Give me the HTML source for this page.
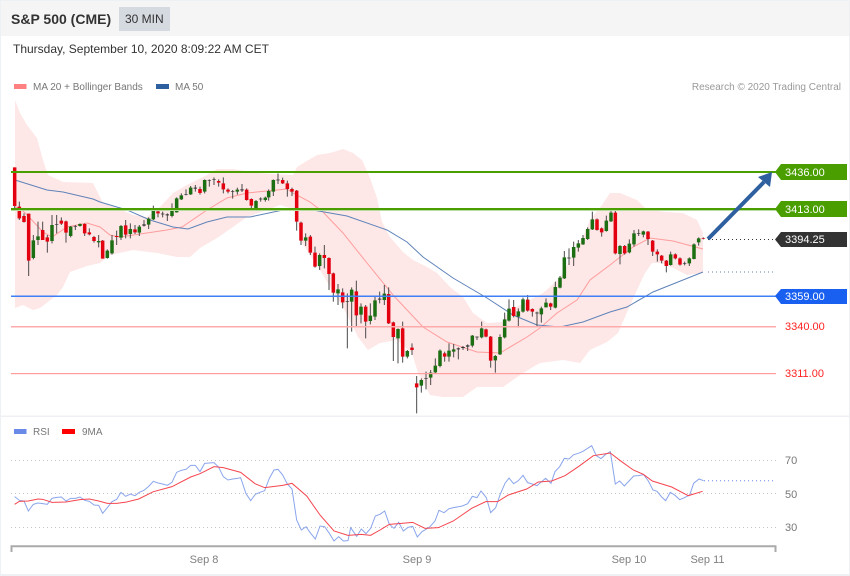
<!DOCTYPE html>
<html><head><meta charset="utf-8">
<style>
html,body{margin:0;padding:0;background:#fff}
body{width:850px;height:576px;overflow:hidden;position:relative;font-family:"Liberation Sans",sans-serif}
svg{position:absolute;left:0;top:0}
text{font-family:"Liberation Sans",sans-serif}
</style></head>
<body>
<svg width="850" height="576" viewBox="0 0 850 576">
<rect width="850" height="576" fill="#fff"/>
<rect x="0" y="0" width="850" height="36" fill="#f5f5f5"/>
<rect x="0" y="0" width="850" height="1" fill="#eef1f4"/>
<rect x="0" y="0" width="1" height="576" fill="#eef1f4"/>
<rect x="849" y="0" width="1" height="576" fill="#eef1f4"/>
<rect x="0" y="415.5" width="850" height="1.5" fill="#eef0f3"/>
<rect x="0" y="574" width="850" height="2" fill="#eef1f4"/>
<rect x="119" y="7" width="51" height="24" fill="#d5d9e0"/>
<text x="11" y="24" font-size="14" font-weight="700" fill="#333">S&amp;P 500 (CME)</text>
<text x="125" y="23" font-size="12" fill="#333">30 MIN</text>
<text x="13" y="53" font-size="12" fill="#333">Thursday, September 10, 2020 8:09:22 AM CET</text>
<rect x="14" y="84" width="12.5" height="5" fill="#ff8080"/>
<text x="33" y="90" font-size="10" fill="#777">MA 20 + Bollinger Bands</text>
<rect x="156" y="84" width="13" height="5" fill="#2e5f9e"/>
<text x="175" y="90" font-size="10" fill="#777">MA 50</text>
<text x="841" y="90" font-size="10" fill="#999" text-anchor="end">Research © 2020 Trading Central</text>

<polygon fill="#fee7e7" points="15,100 20,113 27,125 37,138 43,160 48,175 63,182 93,183 100,197 103,203 117,208 133,215 147,217 160,207 173,193 187,185 207,175 217,169 233,169 257,173 293,175 297,167 305,162 317,155 330,153 343,149 353,153 362,160 370,178 377,198 382,222 390,237 403,252 413,260 427,267 437,273 450,287 463,297 473,313 487,323 502,322 510,310 530,300 543,293 560,278 570,260 577,247 583,237 590,220 602,205 610,193 620,193 637,200 647,210 667,212 683,213 697,220 703,233 703,273 687,275 673,268 660,263 652,263 645,273 637,290 628,310 618,333 607,342 590,350 580,363 563,360 540,363 533,367 520,375 503,387 477,387 463,397 443,397 430,395 418,373 412,353 397,340 380,343 368,350 358,337 343,307 335,295 320,270 300,240 297,210 280,205 267,210 247,217 233,227 217,238 200,248 190,257 177,257 157,253 133,250 110,255 100,263 87,266 70,272 63,287 57,295 40,308 33,310 23,305 15,308"/>

<polyline fill="none" stroke="#ff9c9c" stroke-width="1" points="15,207 20,208 29,217 43,232 52,237 67,227 87,223 100,227 110,235 120,237 140,234 167,230 182,227 207,210 227,198 247,193 267,191 287,189 293,193 310,202 323,212 343,233 367,263 393,295 423,327 447,342 477,352 500,353 527,337 540,328 557,313 577,300 590,280 610,265 633,247 650,238 673,241 703,249"/>
<polyline fill="none" stroke="#5f83b8" stroke-width="1" points="15,180 47,190 63,192 93,199 100,202 127,210 150,220 173,227 188,229 207,222 227,217 250,217 283,210 313,210 347,216 387,230 407,242 423,257 453,278 487,298 513,315 537,325 560,327 583,322 610,312 627,307 653,292 703,272"/>

<!-- candles part 1 -->
<g transform="translate(0 160) scale(.33333)" fill="none">
<path stroke="#4a4a4a" stroke-width="3" d="M44 22V145M58 125V180M72 160V188M86 161V348M100 225V298M114 185V255M128 185V240M142 225V278M156 165V250M170 165V220M184 172V195M198 182V248M212 198V232M226 195V210M240 190V200M254 190V228M268 205V226M282 228V248M296 225V262M308 240V296M322 268V296M336 225V284M350 212V255M363 195V240M377 180V235M391 190V235M405 195V222M418 195V228M432 180V200M446 172V207M460 137V180M474 150V172M488 155V172M502 160V183M516 130V172M530 112V158M544 100V120M558 88V106M572 78V105M586 75V95M600 80V104M614 58V100M628 58V80M642 52V75M656 58V80M670 52V100M684 85V100M698 90V116M712 83V104M726 72V96M740 85V122M754 115V145M768 120V150M782 112V125M796 110V125M806 88V122M820 58V108M834 40V72M848 53V72M862 62V110M876 83V108M890 90V212"/>
<path stroke="#e3000f" stroke-width="10.5" d="M44 22V138M58 140V175M72 168V186M86 161V302M128 210V240M142 232V245M184 182V191M198 184V218M254 192V220M268 217V223M282 231V243M308 242V296M350 228V231M377 196V224M405 208V217M474 154V160M600 87V99M656 63V68M670 70V88M684 89V95M740 89V120M754 117V137M848 60V70M862 70V87M876 87V95M890 92V185"/>
<path stroke="#1c6e12" stroke-width="10.5" d="M100 241V294M114 229V240M156 195V243M212 200V228M240 192V198M296 243V247M322 272V294M336 241V280M363 198V233M391 207V222M418 200V218M446 176V194M460 152V178M516 152V168M530 115V157M544 106V118M572 83V103M614 60V95M712 89V95M768 123V145M796 113V120M806 93V112M820 60V95"/>
<path stroke="#333" stroke-width="10.5" d="M170 192V194M226 199V201M432 193V197M488 161V163M502 163V166M558 103V105M586 83V86M628 60V62M642 58V60M698 94V96M726 88V91M782 116V118M834 59V61"/>
</g>
<!-- candles part 2 -->
<g transform="translate(280 140) scale(.33333)" fill="none">
<path stroke="#4a4a4a" stroke-width="3" d="M63 245V315M77 280V318M91 285V345M105 320V383M119 340V390M133 315V385M147 352V450M160 398V485M174 432V495M188 445V505M202 460V625M215 442V575M229 422V560M243 490V550M257 495V595M271 490V553M285 470V540M299 455V490M313 435V495M326 442V552M340 545V663M354 565V670M368 545V668M382 630V655M396 610V645M410 708V820M424 715V758M438 695V748M452 690V735M466 655V700M480 628V682M494 635V665M507 610V665M521 612V652M535 622V658M549 618V630M563 613V633M577 585V622M591 590V600M605 545V595M618 566V592M632 588V683M646 645V698M660 583V645M674 518V595M687 478V545M701 480V532M715 505V563M729 473V518M743 465V515M757 505V530M771 515V558"/>
<path stroke="#e3000f" stroke-width="10.5" d="M63 248V302M91 290V338M105 338V380M133 345V354M147 354V402M160 400V458M188 457V487M229 454V526M257 500V545M326 462V550M340 547V591M368 565V650M396 623V630M410 730V742M494 640V650M618 568V590M632 590V662M701 501V528M743 479V512M757 507V515"/>
<path stroke="#1c6e12" stroke-width="10.5" d="M77 292V302M119 345V378M174 448V460M215 449V485M243 500V524M271 527V543M285 481V530M313 461V480M354 567V595M382 633V650M424 720V737M452 698V713M466 677V697M480 632V678M507 632V650M521 628V635M577 587V617M605 565V592M646 648V661M660 591V643M674 538V592M687 506V542M715 514V530M729 478V515"/>
<path stroke="#333" stroke-width="10.5" d="M202 484V486M299 476V479M438 714V716M535 625V628M549 621V624M563 616V620M591 590V592M771 518V520"/>
</g>
<!-- candles part 3 -->
<g transform="translate(540 150) scale(.33333)" fill="none">
<path stroke="#4a4a4a" stroke-width="3" d="M4 470V518M18 445V472M32 458V480M46 395V475M60 378V415M73 303V387M87 295V345M101 275V348M115 270V305M129 255V285M143 232V270M157 185V240M171 205V242M185 232V260M199 197V245M213 180V216M226 175V313M240 285V343M254 285V314M268 268V310M282 240V290M296 238V258M310 242V262M324 243V285M338 270V318M352 298V335M365 315V340M379 330V367M392 305V347M406 310V328M420 322V347M434 335V346M448 322V348M462 280V328M476 262V287M490 262V268"/>
<path stroke="#e3000f" stroke-width="10.5" d="M32 460V470M171 208V240M185 235V247M226 188V310M254 288V310M324 245V267M338 272V305M352 305V313M365 317V332M379 332V348M406 313V325M420 325V344M490 264V266"/>
<path stroke="#1c6e12" stroke-width="10.5" d="M4 475V493M18 458V472M46 411V473M60 383V413M73 322V385M101 291V323M115 280V293M129 264V283M143 237V267M157 208V238M199 212V243M213 188V214M240 288V312M268 281V307M282 250V283M310 244V254M392 313V345M448 325V340M462 283V327M476 265V277"/>
<path stroke="#333" stroke-width="10.5" d="M87 323V325M296 250V252M434 339V341"/>
</g>

<!-- horizontal levels -->
<rect x="11" y="171" width="765" height="2" fill="#4a9e00"/>
<rect x="11" y="208" width="765" height="2" fill="#4a9e00"/>
<rect x="11" y="210" width="765" height="1" fill="#b7dba0"/>
<rect x="11" y="295.5" width="765" height="1.5" fill="#3f7ff5"/>
<rect x="11" y="326" width="765" height="1.5" fill="#ffabab"/>
<rect x="11" y="373" width="765" height="1.2" fill="#ff9c9c"/>
<line x1="708" y1="239.5" x2="776" y2="239.5" stroke="#333" stroke-width="1" stroke-dasharray="1 3"/>
<line x1="708" y1="272" x2="776" y2="272" stroke="#5f7fa8" stroke-width="1" stroke-dasharray="1 3"/>

<!-- arrow -->
<line x1="708" y1="239" x2="764" y2="182" stroke="#2e5f9e" stroke-width="4"/>
<polygon fill="#2e5f9e" points="772,172 770,187 758,177"/>

<!-- tags -->
<polygon fill="#4a9e00" points="775,172 781,164 847,164 847,180 781,180"/>
<polygon fill="#4a9e00" points="775,209 781,201 847,201 847,217 781,217"/>
<polygon fill="#333" points="775,239.500 781,232 847,232 847,247 781,247"/>
<polygon fill="#1a60f0" points="775,296 781,289 847,289 847,304 781,304"/>
<text x="785" y="176" font-size="11" fill="#fff">3436.00</text>
<text x="785" y="213" font-size="11" fill="#fff">3413.00</text>
<text x="785" y="243" font-size="11" fill="#fff">3394.25</text>
<text x="785" y="300" font-size="11" fill="#fff">3359.00</text>
<text x="785" y="330" font-size="11" fill="#f22">3340.00</text>
<text x="785" y="377" font-size="11" fill="#f22">3311.00</text>

<!-- RSI panel -->
<rect x="14" y="429" width="12.5" height="5" fill="#6a8ae8"/>
<text x="33" y="435" font-size="10" fill="#777">RSI</text>
<rect x="62" y="429" width="13" height="5" fill="#f00"/>
<text x="82" y="435" font-size="10" fill="#777">9MA</text>
<g stroke="#c4c4c4" stroke-width="1" stroke-dasharray="1 3">
<line x1="11" y1="460.5" x2="776" y2="460.5"/>
<line x1="11" y1="493.500" x2="776" y2="493.500"/>
<line x1="11" y1="527.5" x2="776" y2="527.5"/>
</g>
<g transform="translate(0 415) scale(.33333)" fill="none">
<polyline stroke="#8aa5ec" stroke-width="3" points="44,245 58,256 72,258 85,288 100,268 114,264 128,266 142,268 156,250 170,247 184,246 198,258 212,250 226,250 240,246 254,256 268,259 282,270 296,271 308,295 322,278 336,260 350,253 363,232 377,244 391,237 405,242 418,232 432,226 446,214 460,199 474,204 488,207 502,211 516,202 530,172 544,166 558,163 572,151 586,151 600,170 614,145 628,144 642,143 656,157 670,185 684,195 698,192 712,190 722,188 738,236 752,257 766,238 780,232 794,227 808,190 822,165 834,163 848,180 862,207 876,222 890,315 904,345 918,335 932,355 946,372 960,333 974,335 988,355 1002,378 1016,365 1030,378 1044,377 1052,338 1070,364 1084,342 1098,356 1112,340 1126,303 1140,298 1154,288 1168,328 1182,340 1196,322 1210,348 1224,337 1238,334 1252,366 1266,350 1275,345 1290,335 1305,318 1317,286 1332,293 1347,281 1361,278 1387,273 1403,266 1417,244 1431,248 1443,228 1459,248 1472,293 1487,278 1501,237 1515,205 1527,189 1541,206 1555,197 1569,181 1583,203 1597,207 1611,212 1625,200 1637,190 1653,205 1665,170 1679,155 1693,130 1707,132 1721,119 1735,115 1749,109 1763,100 1775,92 1789,122 1803,131 1817,118 1831,110 1846,207 1859,198 1873,213 1887,198 1901,183 1915,182 1931,179 1945,198 1959,225 1971,229 1985,246 1997,257 2011,232 2025,241 2039,254 2053,248 2069,240 2081,205 2097,192 2111,197"/>
<polyline stroke="#f5454f" stroke-width="3" points="44,268 58,259 85,258 114,252 128,253 156,262 198,261 240,254 268,252 296,258 322,265 350,265 380,261 416,252 460,230 516,215 572,186 600,176 642,155 670,158 722,172 765,206 794,218 848,211 876,205 920,243 960,300 1002,348 1044,361 1084,358 1112,361 1140,345 1168,328 1196,326 1238,322 1275,340 1315,338 1360,318 1415,280 1457,260 1493,260 1525,240 1580,222 1615,201 1655,198 1695,182 1735,155 1780,122 1831,114 1865,140 1900,165 1930,178 1957,198 2015,216 2065,242 2108,229"/>
</g>
<line x1="704" y1="480.7" x2="776" y2="480.7" stroke="#6a8ae8" stroke-width="1" stroke-dasharray="1 3"/>
<path d="M11.500 552V546.300H775.500V552" fill="none" stroke="#aaa" stroke-width="2"/>
<text x="204" y="563" font-size="11" fill="#808080" text-anchor="middle">Sep 8</text>
<text x="417" y="563" font-size="11" fill="#808080" text-anchor="middle">Sep 9</text>
<text x="629" y="563" font-size="11" fill="#808080" text-anchor="middle">Sep 10</text>
<text x="707.500" y="563" font-size="11" fill="#808080" text-anchor="middle">Sep 11</text>
<text x="785" y="464" font-size="11" fill="#777">70</text>
<text x="785" y="498" font-size="11" fill="#777">50</text>
<text x="785" y="531" font-size="11" fill="#777">30</text>
</svg>
</body></html>
